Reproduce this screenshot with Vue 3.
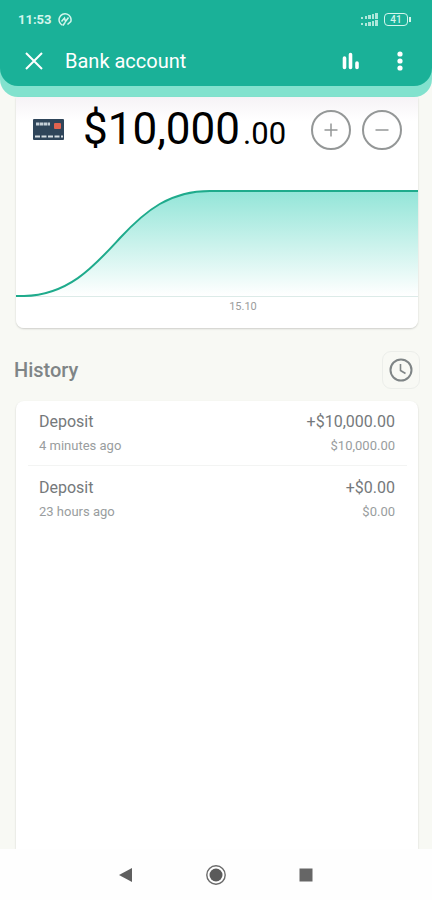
<template>
  <div class="screen">
    <header class="top">
      <div class="top-inner">
        <div class="status-bar">
          <span class="time">11:53</span>
          <svg class="status-app" viewBox="0 0 14 14" fill="none" stroke="currentColor" stroke-width="1.5">
            <path d="M4.5 12.2A6 6 0 1 1 12.8 8.500L9.500 11.500" />
            <path d="M3.500 8.500L6.500 5l1 3.500L10.500 4.500M5 12.500l2-3" />
          </svg>
          <svg class="signal" viewBox="0 0 17 14" fill="currentColor">
            <path d="M0 4h2v2H0zM4 3h2v3H4zM7 2h3v4H7zM11 1h2v5h-2zM14 0h3v6h-3z" opacity=".8" />
            <path d="M0 10h2v2H0zM4 10h2v3H4zM7 9h3v4H7zM11 8h2v5h-2zM14 7h3v6h-3z" opacity=".8" />
          </svg>
          <span class="battery">41</span>
        </div>

        <div class="app-bar">
          <button class="icon-btn" aria-label="Close">
            <svg viewBox="0 0 24 24" fill="none" stroke="currentColor" stroke-width="2">
              <path d="M4 4l16 16M20 4L4 20" />
            </svg>
          </button>
          <h1>Bank account</h1>
          <button class="icon-btn" aria-label="Statistics">
            <svg viewBox="0 0 24 24" fill="none" stroke="currentColor" stroke-width="3.600" stroke-linecap="round">
              <path d="M5.500 9v9.500M11.500 5.500v13M18 14v4.500" />
            </svg>
          </button>
          <button class="icon-btn more" aria-label="More options">
            <svg viewBox="0 0 24 24" fill="currentColor">
              <circle cx="12" cy="5" r="2.600" />
              <circle cx="12" cy="12" r="2.600" />
              <circle cx="12" cy="19" r="2.600" />
            </svg>
          </button>
        </div>
      </div>
    </header>

    <main class="content">
      <section class="balance-card">
        <div class="balance-row">
          <svg class="bank-card" viewBox="0 0 32 22">
            <rect x="1" width="31" height="21" rx="1" fill="#2f455a" />
            <path d="M4 5h14" stroke="#c5d0d8" stroke-width="3" stroke-dasharray="3 .5 4 .5" />
            <rect x="22" y="4" width="7" height="6" rx="1" fill="#e2634f" />
            <path d="M3 17.500h28" stroke="#d5dde2" stroke-width="2" stroke-dasharray="5 1.500" />
          </svg>
          <p class="balance">$10,000<span class="cents">.00</span></p>
          <button class="round-btn" aria-label="Deposit">
            <svg viewBox="0 0 16 16" fill="none" stroke="currentColor" stroke-width="1.500">
              <path d="M8 1.500v13M1.500 8h13" />
            </svg>
          </button>
          <button class="round-btn" aria-label="Withdraw">
            <svg viewBox="0 0 16 16" fill="none" stroke="currentColor" stroke-width="1.500">
              <path d="M1.500 8h13" />
            </svg>
          </button>
        </div>

        <svg class="chart" viewBox="0 0 402 108" preserveAspectRatio="none">
          <defs>
            <linearGradient id="area" x1="0" y1="0" x2="0" y2="1">
              <stop offset="0" stop-color="#93e5d8" />
              <stop offset="1" stop-color="#ffffff" />
            </linearGradient>
          </defs>
          <path :d="`${curve}V106H0z`" fill="url(#area)" />
          <path d="M0 106.500H402" stroke="#dcebe8" />
          <path :d="curve" fill="none" stroke="#1fab8c" stroke-width="2" />
        </svg>
        <p class="chart-label">15.10</p>
      </section>

      <div class="history-head">
        <h2>History</h2>
        <button class="clock-btn" aria-label="Time range">
          <svg viewBox="0 0 24 24" fill="none" stroke="currentColor" stroke-width="2">
            <circle cx="12" cy="12" r="10.500" />
            <path d="M11.500 6v6.500l5 3" stroke-width="1.600" />
          </svg>
        </button>
      </div>

      <ul class="history">
        <li v-for="item in history" :key="item.when">
          <div class="line main-line">
            <span>{{ item.name }}</span>
            <span>{{ item.amount }}</span>
          </div>
          <div class="line sub-line">
            <span>{{ item.when }}</span>
            <span>{{ item.total }}</span>
          </div>
        </li>
      </ul>
    </main>

    <nav class="nav-bar">
      <button aria-label="Back">
        <svg viewBox="0 0 20 20"><path d="M3 10L16 3v14z" fill="#5f5f5f" /></svg>
      </button>
      <button aria-label="Home">
        <svg viewBox="0 0 20 20">
          <circle cx="10" cy="10" r="9.200" fill="none" stroke="#6a6a6a" stroke-width="1.400" />
          <circle cx="10" cy="10" r="6.500" fill="#5a5a5a" />
        </svg>
      </button>
      <button aria-label="Recent apps">
        <svg viewBox="0 0 20 20"><rect x="3.500" y="3.500" width="13" height="13" fill="#666" /></svg>
      </button>
    </nav>
  </div>
</template>

<script setup>
import { ref } from 'vue'

const curve = 'M0 106H8C54 105 80 74 104 48C130 20 154 1 194 1H402'

const history = ref([
  { name: 'Deposit', amount: '+$10,000.00', when: '4 minutes ago', total: '$10,000.00' },
  { name: 'Deposit', amount: '+$0.00', when: '23 hours ago', total: '$0.00' },
])
</script>

<style>
body {
  margin: 0;
  background: #f8f9f4;
}
</style>

<style scoped>
.screen {
  display: flex;
  flex-direction: column;
  min-height: 100vh;
  background: #f8f9f4;
  font-family: Roboto, "Liberation Sans", sans-serif;
}

h1,
h2,
p,
ul {
  margin: 0;
  padding: 0;
  font-weight: 400;
}

button {
  display: flex;
  align-items: center;
  justify-content: center;
  padding: 0;
  border: none;
  background: none;
  color: inherit;
  cursor: pointer;
}

/* Header */
.top {
  padding-bottom: 11px;
  border-radius: 0 0 18px 18px;
  background: #82e2ce;
  color: #fff;
}

.top-inner {
  border-radius: 0 0 18px 18px;
  background: #1ab198;
}

.status-bar {
  display: flex;
  align-items: center;
  box-sizing: border-box;
  height: 36px;
  padding: 3px 24px 0 18px;
  color: #d3f5ec;
}

.time {
  font-size: 13px;
  font-weight: 700;
}

.status-app {
  width: 14px;
  height: 14px;
  margin-left: 6px;
}

.signal {
  width: 17px;
  height: 14px;
  margin-left: auto;
}

.battery {
  position: relative;
  width: 22px;
  margin-left: 6px;
  border: 1px solid currentColor;
  border-radius: 4px;
  font-size: 10px;
  font-weight: 500;
  line-height: 11px;
  text-align: center;
}

.battery::after {
  content: "";
  position: absolute;
  top: 3px;
  right: -4px;
  width: 2px;
  height: 5px;
  background: currentColor;
}

.app-bar {
  display: flex;
  align-items: center;
  height: 50px;
  padding: 0 20px 0 22px;
}

.app-bar h1 {
  flex: 1;
  margin-left: 19px;
  font-size: 20px;
  line-height: 24px;
}

.icon-btn {
  width: 24px;
  height: 24px;
}

.icon-btn svg {
  width: 24px;
  height: 24px;
}

.more {
  margin-left: 25px;
}

/* Balance */
.content {
  display: flex;
  flex: 1;
  flex-direction: column;
  padding: 0 14px 0 16px;
}

.balance-card {
  border-radius: 0 0 8px 8px;
  background: linear-gradient(#f6f3f6, #fff 24px);
  box-shadow: 0 1px 2px rgba(0, 0, 0, 0.18);
}

.balance-row {
  display: flex;
  align-items: center;
  height: 65px;
  padding: 0 16px;
}

.bank-card {
  width: 32px;
  height: 22px;
}

.balance {
  flex: 1;
  margin-left: 19px;
  padding-top: 4px;
  color: #000;
  font-size: 44px;
  line-height: 52px;
  white-space: nowrap;
}

.cents {
  margin-left: 3px;
  font-size: 31px;
}

.round-btn {
  width: 40px;
  height: 40px;
  border: 2px solid #949797;
  border-radius: 50%;
  color: #949797;
}

.round-btn + .round-btn {
  margin-left: 11px;
}

.round-btn svg {
  width: 16px;
  height: 16px;
}

.chart {
  display: block;
  width: 100%;
  height: 108px;
  margin-top: 28px;
}

.chart-label {
  padding: 1px 0 13px 52px;
  color: #9a9c9c;
  font-size: 11px;
  line-height: 16px;
  text-align: center;
}

/* History */
.history-head {
  display: flex;
  align-items: center;
  justify-content: space-between;
  margin: 23px -2px 12px;
  color: #7f8586;
}

.history-head h2 {
  font-size: 20px;
  font-weight: 500;
  line-height: 24px;
}

.clock-btn {
  width: 38px;
  height: 38px;
  border: 1px solid #eceeea;
  border-radius: 9px;
}

.clock-btn svg {
  width: 24px;
  height: 24px;
}

.history {
  flex: 1;
  padding: 0 11px 0 12px;
  border-radius: 8px 8px 0 0;
  background: #fff;
  box-shadow: 0 1px 2px rgba(0, 0, 0, 0.18);
  list-style: none;
}

.history li {
  padding: 9px 12px 7px 11px;
}

.history li + li {
  padding-top: 10px;
  border-top: 1px solid #f3f4f3;
}

.line {
  display: flex;
  justify-content: space-between;
  line-height: 24px;
}

.main-line {
  color: #75797b;
  font-size: 16px;
}

.sub-line {
  color: #999d9e;
  font-size: 13px;
}

/* System navigation */
.nav-bar {
  display: flex;
  justify-content: center;
  gap: 70px;
  height: 51px;
  background: #fefefe;
}

.nav-bar svg {
  width: 20px;
  height: 20px;
}
</style>
